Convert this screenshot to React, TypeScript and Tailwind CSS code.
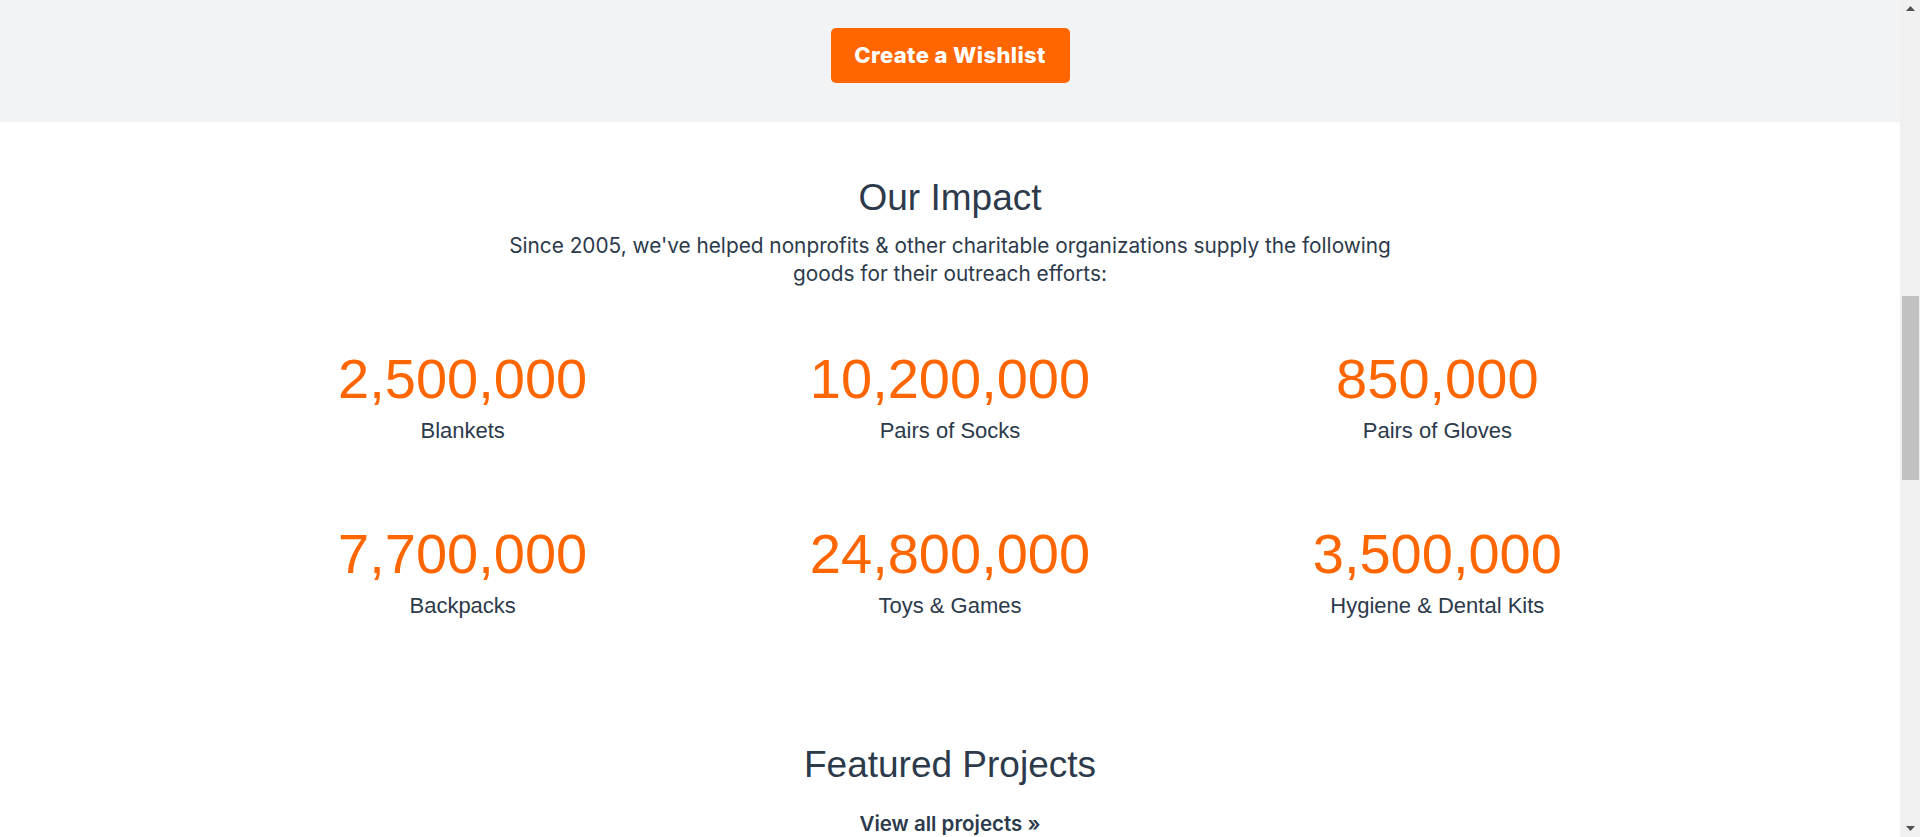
import React from "react";

const stats = [
  { value: "2,500,000", label: "Blankets" },
  { value: "10,200,000", label: "Pairs of Socks" },
  { value: "850,000", label: "Pairs of Gloves" },
  { value: "7,700,000", label: "Backpacks" },
  { value: "24,800,000", label: "Toys & Games" },
  { value: "3,500,000", label: "Hygiene & Dental Kits" },
];

const arial = "font-['Liberation_Sans',Arial,sans-serif]";
const body = "font-['Inter','Noto_Sans',sans-serif]";

function Scrollbar() {
  return (
    <div className="w-[20px] shrink-0 bg-[#f0f0f0] flex flex-col items-center">
      <div className="h-[17px] w-full flex items-center justify-center">
        <svg width="9" height="5" viewBox="0 0 9 5">
          <path d="M0 5 L4.5 0 L9 5 Z" fill="#505050" />
        </svg>
      </div>
      <div className="h-[279px]" />
      <div className="w-[17px] h-[184px] bg-[#c1c1c1]" />
      <div className="flex-1" />
      <div className="h-[17px] w-full flex items-center justify-center">
        <svg width="9" height="5" viewBox="0 0 9 5">
          <path d="M0 0 L9 0 L4.5 5 Z" fill="#505050" />
        </svg>
      </div>
    </div>
  );
}

export default function App() {
  return (
    <div className="flex h-[837px] w-full overflow-hidden bg-white text-[#2c3a4b]">
      <main className="flex-1 flex flex-col items-center">
        {/* wishlist band */}
        <section className="w-full h-[122px] bg-[#f2f3f5] flex justify-center">
          <button className={`mt-[28px] h-[55px] w-[239px] rounded-[5px] bg-[#ff6600] text-white text-[22px] font-extrabold tracking-[0.4px] ${body}`}>
            Create a Wishlist
          </button>
        </section>

        {/* impact */}
        <h2 className={`mt-[57px] text-[37px] leading-none ${arial}`}>Our Impact</h2>
        <p className={`mt-[16px] max-w-[900px] text-center text-[20.8px] leading-[28px] ${body}`}>
          Since 2005, we've helped nonprofits &amp; other charitable organizations supply the following goods for their outreach efforts:
        </p>

        <div className="mt-[63px] w-[1462px] grid grid-cols-3 gap-y-[84px]">
          {stats.map((s) => (
            <div key={s.label} className={`flex flex-col items-center ${arial}`}>
              <span className="text-[56px] leading-none text-[#ff6600]">{s.value}</span>
              <span className="mt-[13px] text-[22px] leading-none">{s.label}</span>
            </div>
          ))}
        </div>

        {/* projects */}
        <h2 className={`mt-[129px] text-[37px] leading-none ${arial}`}>Featured Projects</h2>
        <a href="#" className={`mt-[31px] text-[20.5px] leading-none font-semibold ${body}`}>
          View all projects »
        </a>
      </main>
      <Scrollbar />
    </div>
  );
}
